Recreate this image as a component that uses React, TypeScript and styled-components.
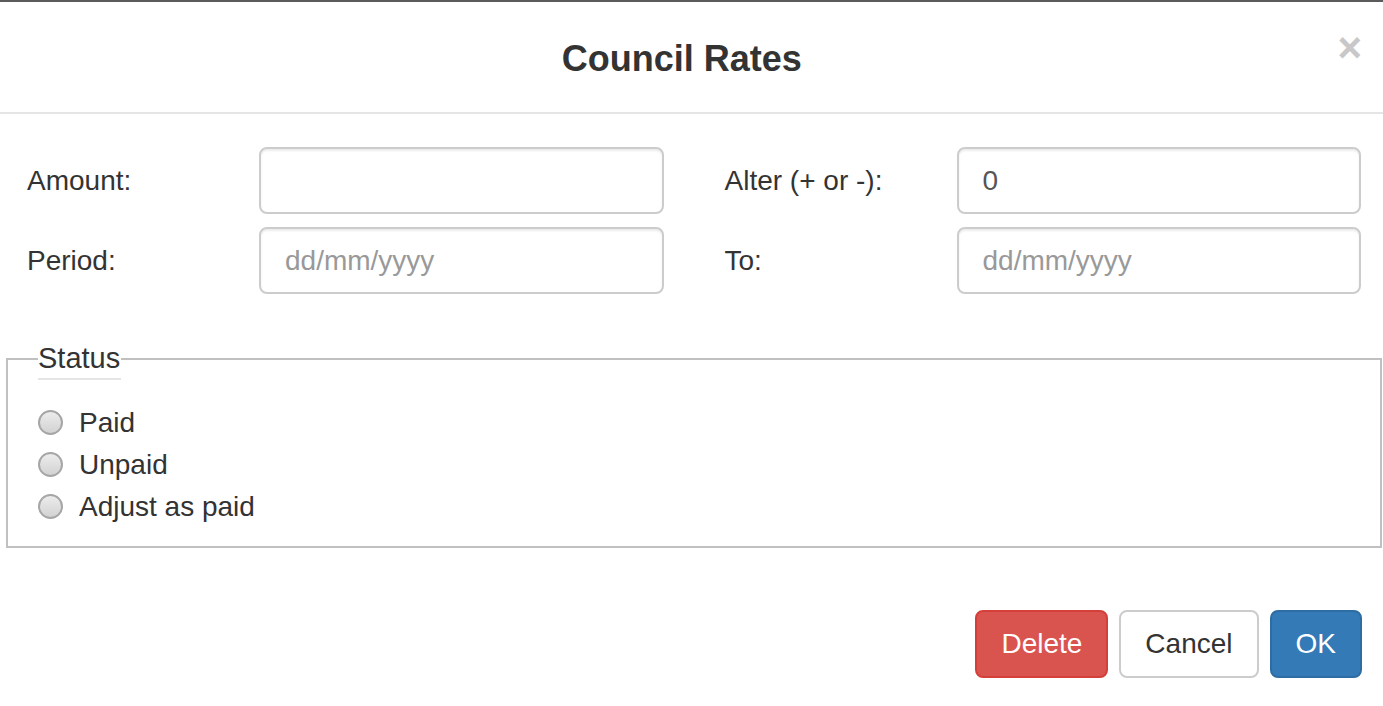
import React from 'react'
import styled, { createGlobalStyle } from 'styled-components'

const GlobalStyle = createGlobalStyle`
  html, body {
    margin: 0;
    padding: 0;
    background: #fff;
  }
  body {
    font-family: "Liberation Sans", Arial, sans-serif;
    color: #333;
  }
  * {
    box-sizing: border-box;
  }
`

const fieldData = [
  [
    { id: 'amount', label: 'Amount:', value: '', placeholder: '' },
    { id: 'alter', label: 'Alter (+ or -):', value: '0', placeholder: '' },
  ],
  [
    { id: 'period', label: 'Period:', value: '', placeholder: 'dd/mm/yyyy' },
    { id: 'to', label: 'To:', value: '', placeholder: 'dd/mm/yyyy' },
  ],
]

const statusData = ['Paid', 'Unpaid', 'Adjust as paid']

const Modal = styled.div`
  width: 1383px;
  min-height: 706px;
  border-top: 2px solid #5b5b5b;
  background: #fff;
`

const Header = styled.div`
  display: flex;
  align-items: center;
  height: 112px;
  padding: 4px 21px 0 26px;
  border-bottom: 2px solid #e5e5e5;
`

const Title = styled.h4`
  flex: 1;
  margin: 0;
  text-align: center;
  font-size: 36px;
  line-height: 1;
  font-weight: bold;
  color: #333;
`

const Close = styled.button`
  align-self: flex-start;
  margin-top: 21px;
  padding: 0;
  border: 0;
  background: transparent;
  font-family: "Liberation Sans", Arial, sans-serif;
  font-size: 42px;
  font-weight: bold;
  line-height: 1;
  color: #c8c8c8;
  cursor: pointer;
`

const Body = styled.div`
  padding: 33px 22px 0 27px;
`

const FormRows = styled.div`
  display: flex;
  flex-direction: column;
  gap: 13px;
`

const FormRow = styled.div`
  display: grid;
  grid-template-columns: 1fr 1fr;
  column-gap: 61px;
`

const Field = styled.div`
  display: grid;
  grid-template-columns: 232px 1fr;
  align-items: center;
`

const Label = styled.label`
  font-size: 28px;
  color: #333;
`

const Input = styled.input`
  width: 100%;
  height: 67px;
  padding: 0 24px;
  font-family: "Liberation Sans", Arial, sans-serif;
  font-size: 28px;
  color: #555;
  background: #fff;
  border: 2px solid #ccc;
  border-radius: 8px;
  box-shadow: inset 0 2px 2px rgba(0, 0, 0, 0.075);
  outline: none;

  &::placeholder {
    color: #999;
  }
`

const Fieldset = styled.fieldset`
  margin: 44px 1px 0 -21px;
  padding: 0 30px 19px 30px;
  border: 2px solid #c0c0c0;
  width: 1376px;
`

const Legend = styled.legend`
  padding: 0 1px 0 0;
  font-size: 29px;
  line-height: 40px;
  color: #333;
  border-bottom: 2px solid #e5e5e5;
  margin-bottom: 22px;
`

const RadioList = styled.div`
  display: flex;
  flex-direction: column;
  gap: 1px;
`

const RadioRow = styled.label`
  display: flex;
  align-items: center;
  gap: 16px;
  height: 41px;
  font-size: 28px;
  color: #333;
`

const Radio = styled.input`
  appearance: none;
  margin: 0;
  width: 25px;
  height: 25px;
  border-radius: 50%;
  border: 2px solid #a6a6a6;
  background: linear-gradient(#ececec, #d2d2d2);
`

const Footer = styled.div`
  display: flex;
  justify-content: flex-end;
  gap: 11px;
  padding: 62px 21px 0 0;
`

const Button = styled.button<{ $variant: 'danger' | 'default' | 'primary' }>`
  padding: 12px 24px;
  font-family: "Liberation Sans", Arial, sans-serif;
  font-size: 28px;
  line-height: 40px;
  border-radius: 8px;
  border: 2px solid
    ${({ $variant }) =>
      $variant === 'danger' ? '#d43f3a' : $variant === 'primary' ? '#2e6da4' : '#ccc'};
  background: ${({ $variant }) =>
    $variant === 'danger' ? '#d9534f' : $variant === 'primary' ? '#337ab7' : '#fff'};
  color: ${({ $variant }) => ($variant === 'default' ? '#333' : '#fff')};
`

const App = () => {
  return (
    <Modal>
      <GlobalStyle />
      <Header>
        <Title>Council Rates</Title>
        <Close aria-label="close">×</Close>
      </Header>
      <Body>
        <FormRows>
          {fieldData.map((row, i) => (
            <FormRow key={i}>
              {row.map((field) => (
                <Field key={field.id}>
                  <Label htmlFor={field.id}>{field.label}</Label>
                  <Input
                    id={field.id}
                    defaultValue={field.value}
                    placeholder={field.placeholder}
                  />
                </Field>
              ))}
            </FormRow>
          ))}
        </FormRows>
        <Fieldset>
          <Legend>Status</Legend>
          <RadioList>
            {statusData.map((status) => (
              <RadioRow key={status}>
                <Radio type="radio" name="status" />
                {status}
              </RadioRow>
            ))}
          </RadioList>
        </Fieldset>
      </Body>
      <Footer>
        <Button $variant="danger">Delete</Button>
        <Button $variant="default">Cancel</Button>
        <Button $variant="primary">OK</Button>
      </Footer>
    </Modal>
  )
}

export default App
